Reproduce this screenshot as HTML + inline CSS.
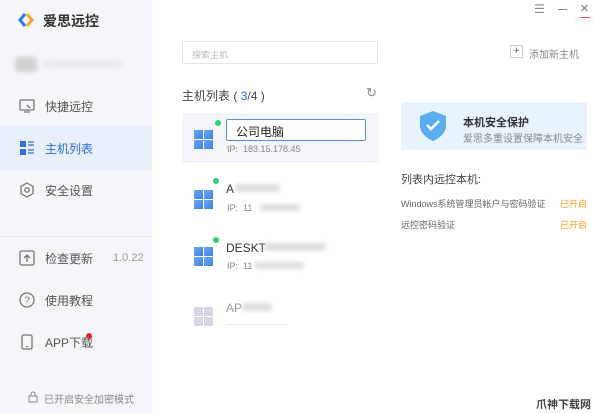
<!DOCTYPE html>
<html><head><meta charset="utf-8"><style>
*{margin:0;padding:0;box-sizing:border-box}
body{width:600px;height:413px;overflow:hidden;background:#fff;font-family:"Liberation Sans","Noto Sans CJK SC",sans-serif;color:#333;position:relative}
.side{position:absolute;left:0;top:0;width:152px;height:413px;background:#f4f6fb}
.a{position:absolute}
.nav{position:absolute;left:0;width:152px;height:44px;display:flex;align-items:center;font-size:12px;color:#555}
.nav .ic{position:absolute;left:19px;top:14px;width:16px;height:16px}
.nav span{position:absolute;left:45px}
.blur{position:absolute;background:#ddd;filter:blur(2px);border-radius:3px}
.host{position:absolute;left:182px;width:197px;height:50px}
.win{position:absolute;left:12px;top:17px;width:19px;height:19px}
.win i{position:absolute;width:9px;height:9px;background:linear-gradient(135deg,#6aa8f5,#3f7fe6)}
.dot{position:absolute;width:6px;height:6px;border-radius:50%;background:#2fd07a}
</style></head><body>
<div class="side"></div>
<svg class="a" style="left:17px;top:12px" width="18" height="16" viewBox="0 0 18 16"><path d="M8 2 L3 8 L8 14" stroke="#2d7be6" stroke-width="3" fill="none"/><path d="M10 2 L15 8 L10 14" stroke="#f5a623" stroke-width="3" fill="none"/></svg>
<div class="a" style="left:43px;top:11px;font-size:14px;font-weight:bold;color:#333">爱思远控</div>
<div class="blur" style="left:15px;top:57px;width:22px;height:15px;background:#d2d2d2"></div>
<div class="blur" style="left:42px;top:61px;width:80px;height:6px;background:#e8e8e8"></div>
<div class="nav" style="top:84px"><svg class="ic" viewBox="0 0 16 16"><rect x="1" y="2" width="14" height="10" rx="1" fill="none" stroke="#777" stroke-width="1.3"/><path d="M5 14h6M8 7l3 3" stroke="#777" stroke-width="1.3"/></svg><span>快捷远控</span></div>
<div class="nav" style="top:126px;background:#e8effb;color:#2e6fd8"><svg class="ic" viewBox="0 0 16 16"><rect x="1" y="1" width="6" height="6" fill="#2e6fd8"/><rect x="1" y="9" width="6" height="6" fill="#2e6fd8"/><path d="M9 2h6M9 5h6M9 10h6M9 13h6" stroke="#2e6fd8" stroke-width="1.3"/></svg><span>主机列表</span></div>
<div class="nav" style="top:168px"><svg class="ic" viewBox="0 0 16 16"><path d="M8 1l6 3.5v7L8 15l-6-3.5v-7z" fill="none" stroke="#777" stroke-width="1.3"/><circle cx="8" cy="8" r="2.2" fill="none" stroke="#777" stroke-width="1.3"/></svg><span>安全设置</span></div>
<div class="a" style="left:0;top:236px;width:152px;height:1px;background:#e6e8ee"></div>
<div class="nav" style="top:236px"><svg class="ic" viewBox="0 0 16 16"><rect x="1" y="1" width="14" height="14" rx="1.5" fill="none" stroke="#777" stroke-width="1.3"/><path d="M8 12V5M5 8l3-3 3 3" fill="none" stroke="#777" stroke-width="1.3"/></svg><span>检查更新</span><span style="left:113px;color:#999;font-size:11px">1.0.22</span></div>
<div class="nav" style="top:278px"><svg class="ic" viewBox="0 0 16 16"><circle cx="8" cy="8" r="7" fill="none" stroke="#777" stroke-width="1.3"/><text x="8" y="11.5" font-size="10" text-anchor="middle" fill="#777" font-family="Liberation Sans">?</text></svg><span>使用教程</span></div>
<div class="nav" style="top:320px"><svg class="ic" viewBox="0 0 16 16"><rect x="3" y="1" width="10" height="14" rx="1.5" fill="none" stroke="#777" stroke-width="1.3"/><path d="M7 12.5h2" stroke="#777"/></svg><span>APP下载</span><div class="dot" style="left:86px;top:13px;background:#e8252b"></div></div>
<svg class="a" style="left:28px;top:391px" width="10" height="12" viewBox="0 0 10 12"><rect x="1" y="5" width="8" height="6" fill="none" stroke="#888"/><path d="M3 5V3a2 2 0 0 1 4 0v2" fill="none" stroke="#888"/></svg>
<div class="a" style="left:44px;top:391px;font-size:10px;color:#888">已开启安全加密模式</div>

<div class="a" style="left:534px;top:2px;font-size:12px;color:#888">☰</div>
<div class="a" style="left:558px;top:9px;width:9px;height:1px;background:#888"></div>
<div class="a" style="left:580px;top:0px;font-size:15px;color:#777">×</div>
<div class="a" style="left:580px;top:17px;width:10px;height:1px;background:#e55"></div>

<div class="a" style="left:182px;top:41px;width:196px;height:23px;border:1px solid #e3e5ea;border-radius:2px;font-size:9px;color:#bbb;padding:6px 9px">搜索主机</div>
<div class="a" style="left:510px;top:45px;width:13px;height:13px;border:1px solid #ccc;font-size:11px;line-height:11px;text-align:center;color:#666">+</div>
<div class="a" style="left:529px;top:46px;font-size:10px;color:#888">添加新主机</div>
<div class="a" style="left:182px;top:87px;font-size:12px;color:#444">主机列表 ( <span style="color:#2e6fd8">3</span>/4 )</div>
<div class="a" style="left:366px;top:85px;font-size:13px;color:#888">↻</div>

<div class="host" style="top:113px;background:#f3f5fa"><div class="win"><i style="left:0;top:0"></i><i style="left:10px;top:0"></i><i style="left:0;top:10px"></i><i style="left:10px;top:10px"></i></div><div class="dot" style="left:33px;top:7px"></div>
<div class="a" style="left:44px;top:6px;width:140px;height:22px;border:1.5px solid #5b8fe0;border-radius:2px;background:#fff;font-size:12px;padding:3px 9px;color:#222">公司电脑</div>
<div class="a" style="left:45px;top:31px;font-size:9px;color:#888">IP:&nbsp; 183.15.178.45</div></div>

<div class="host" style="top:173px"><div class="win"><i style="left:0;top:0"></i><i style="left:10px;top:0"></i><i style="left:0;top:10px"></i><i style="left:10px;top:10px"></i></div><div class="dot" style="left:31px;top:5px"></div>
<div class="a" style="left:44px;top:9px;font-size:12px;color:#333">A</div><div class="blur" style="left:53px;top:11px;width:45px;height:8px"></div>
<div class="a" style="left:45px;top:30px;font-size:9px;color:#888">IP:&nbsp; 11</div><div class="blur" style="left:78px;top:31px;width:40px;height:7px"></div></div>

<div class="host" style="top:230px"><div class="win"><i style="left:0;top:0"></i><i style="left:10px;top:0"></i><i style="left:0;top:10px"></i><i style="left:10px;top:10px"></i></div><div class="dot" style="left:31px;top:7px"></div>
<div class="a" style="left:44px;top:11px;font-size:12px;color:#333">DESKT</div><div class="blur" style="left:82px;top:13px;width:62px;height:8px"></div>
<div class="a" style="left:45px;top:31px;font-size:9px;color:#888">IP:&nbsp; 11</div><div class="blur" style="left:72px;top:32px;width:50px;height:7px"></div></div>

<div class="host" style="top:290px"><div class="win"><i style="left:0;top:0;background:#d4d8e4"></i><i style="left:10px;top:0;background:#d4d8e4"></i><i style="left:0;top:10px;background:#d4d8e4"></i><i style="left:10px;top:10px;background:#d4d8e4"></i></div>
<div class="a" style="left:44px;top:11px;font-size:12px;color:#999">AP</div><div class="blur" style="left:60px;top:13px;width:30px;height:8px"></div>
<div class="a" style="left:44px;top:34px;width:62px;height:1px;background:#eee"></div></div>

<div class="a" style="left:401px;top:102px;width:186px;height:48px;background:#e8f3fd;border-radius:2px"></div>
<svg class="a" style="left:418px;top:110px" width="30" height="32" viewBox="0 0 30 32"><path d="M15 1 L28 6 V15 C28 23 22 28 15 31 C8 28 2 23 2 15 V6 Z" fill="#5aaef0"/><path d="M9 15 l4 4 8-8" stroke="#fff" stroke-width="2.5" fill="none"/></svg>
<div class="a" style="left:463px;top:114px;font-size:11px;font-weight:bold;color:#333">本机安全保护</div>
<div class="a" style="left:463px;top:130px;font-size:10px;color:#888">爱思多重设置保障本机安全</div>
<div class="a" style="left:401px;top:171px;font-size:11px;color:#444">列表内远控本机:</div>
<div class="a" style="left:401px;top:197px;font-size:9px;color:#666">Windows系统管理员帐户与密码验证</div>
<div class="a" style="left:560px;top:197px;font-size:9px;color:#f0a020">已开启</div>
<div class="a" style="left:401px;top:218px;font-size:9px;color:#666">远控密码验证</div>
<div class="a" style="left:560px;top:218px;font-size:9px;color:#f0a020">已开启</div>
<div class="a" style="left:536px;top:396px;font-size:11px;font-weight:bold;color:#444">爪神下载网</div>
</body></html>
